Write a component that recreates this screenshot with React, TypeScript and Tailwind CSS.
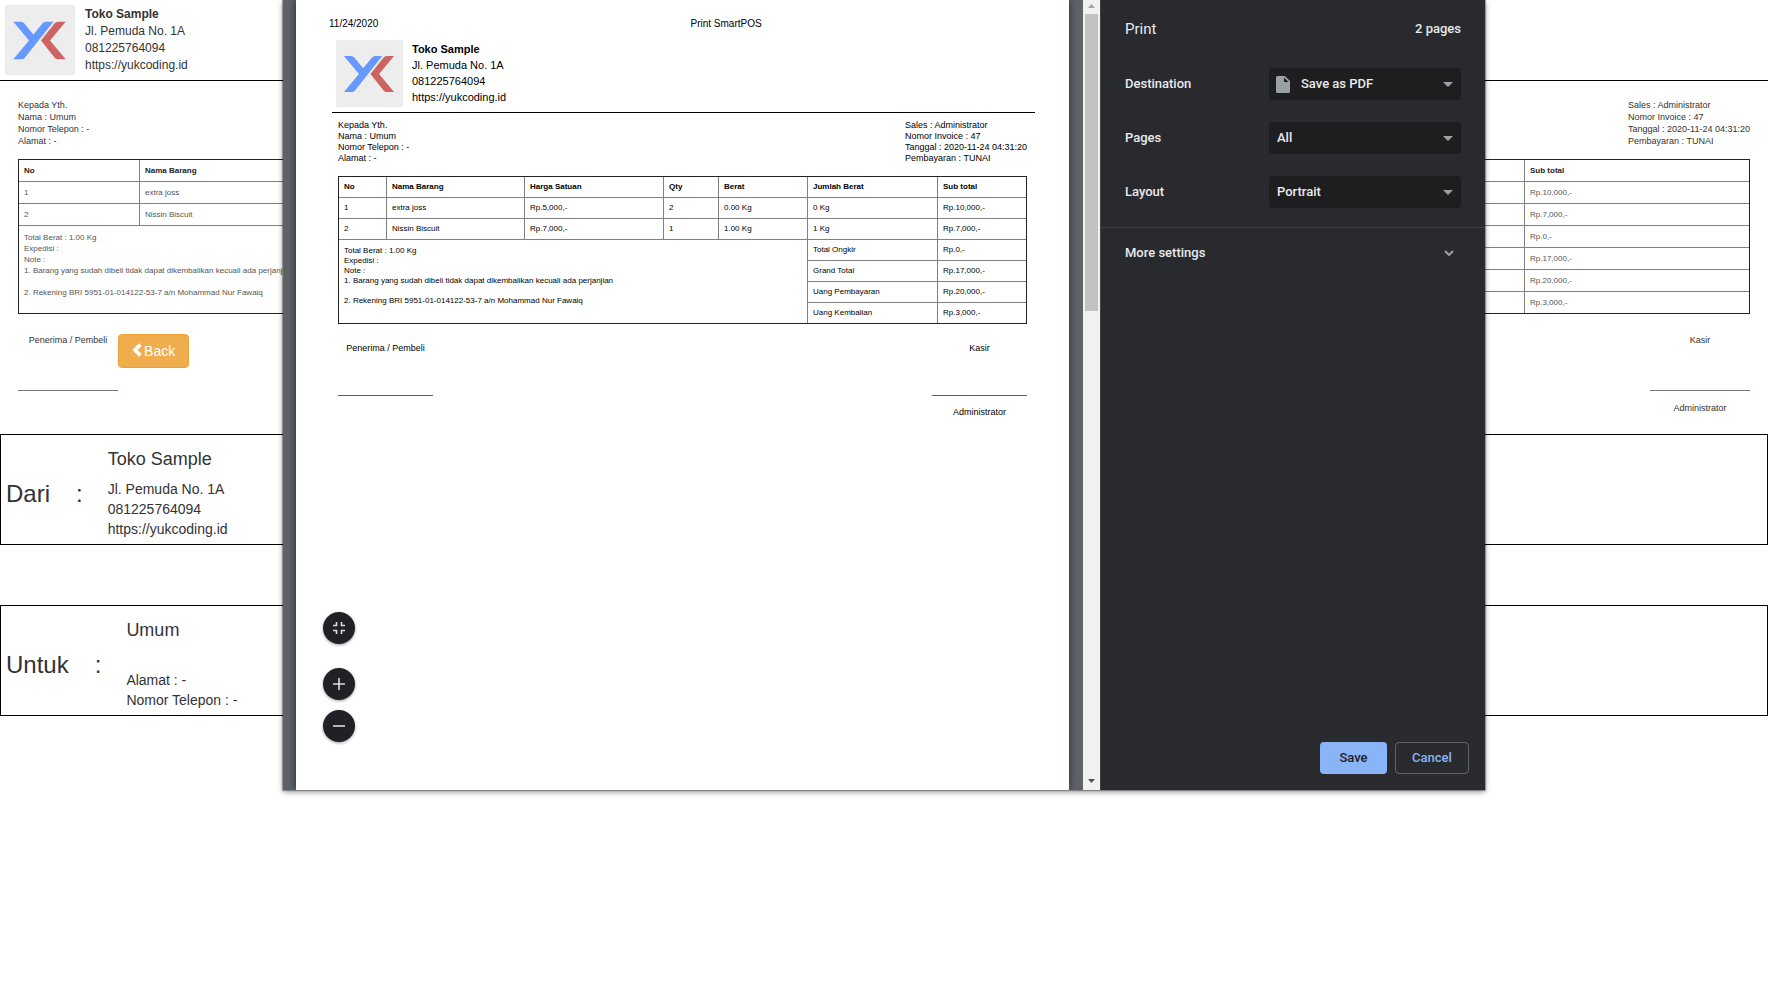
import { ReactNode } from 'react'

type Variant = 'page' | 'print'

const STYLES = {
    page: {
        header: 'flex gap-[10px] border-b border-black p-[5px]',
        logo: 'h-[70px] w-[70px]',
        shop: 'pt-px text-[12px] leading-[17px]',
        body: 'px-[18px] pt-[18px] text-[#333]',
        info: 'mb-3 flex justify-between text-[9px] leading-[12px]',
        cells: 'text-[8px] leading-[11px] text-[#555]',
        head: 'text-[#222]',
        row: 'h-[22px]',
        firstRow: 'h-[21px]',
        note: 'pt-[6px]',
        cols: ['w-[120px]', '', '', '', '', '', 'w-[225px]'],
        sign: 'mt-5 flex justify-between text-[9px] leading-[12px]',
        line: 'mt-[34px]',
        name: 'mt-[10px]',
        underscores: 20,
    },
    print: {
        header: 'ml-[3px] mr-px flex gap-[9px] border-b border-black px-1 pb-[5px]',
        logo: 'h-[67px] w-[67px]',
        shop: 'pt-px text-[11px] leading-[16px]',
        body: 'pl-[9px] pr-[9px] pt-[7px] text-black',
        info: 'mb-3 flex justify-between text-[9px] leading-[11px]',
        cells: 'text-[8px] leading-[10px] text-black',
        head: '',
        row: 'h-[21px]',
        firstRow: 'h-[20px]',
        note: 'pt-[6px]',
        cols: ['w-[47px]', 'w-[138px]', 'w-[139px]', 'w-[55px]', 'w-[89px]', 'w-[130px]', ''],
        sign: 'mt-[18px] flex justify-between text-[9px] leading-[12px]',
        line: 'mt-[31px]',
        name: 'mt-[9px]',
        underscores: 19,
    },
}

const HEADINGS = ['No', 'Nama Barang', 'Harga Satuan', 'Qty', 'Berat', 'Jumlah Berat', 'Sub total']

const ITEMS = [
    ['1', 'extra joss', 'Rp.5,000,-', '2', '0.00 Kg', '0 Kg', 'Rp.10,000,-'],
    ['2', 'Nissin Biscuit', 'Rp.7,000,-', '1', '1.00 Kg', '1 Kg', 'Rp.7,000,-'],
]

const TOTALS = [
    ['Total Ongkir', 'Rp.0,-'],
    ['Grand Total', 'Rp.17,000,-'],
    ['Uang Pembayaran', 'Rp.20,000,-'],
    ['Uang Kembalian', 'Rp.3,000,-'],
]

function Logo({ className }: { className: string }) {
    return (
        <svg className={`shrink-0 ${className}`} viewBox="0 0 70 70" role="img" aria-label="Toko Sample">
            <rect width="70" height="70" fill="#ededed" />
            <path
                d="M8.3 16.700h7.500q2 0 3.300 1.600l9.300 11.200 9.200-11.200q1.300-1.600 3.300-1.600h7.500L19.800 52.700q-1.300 1.600-3.300 1.600H8.300L24 35.500z"
                fill="#6699ff"
            />
            <path
                d="M60.700 16.700h-7.700q-2 0-3.300 1.600L36 35.500l13.700 17.200q1.300 1.600 3.300 1.600h7.700L45 35.500z"
                fill="#cc6464"
            />
        </svg>
    )
}

function InvoiceTable({ variant }: { variant: Variant }) {
    const s = STYLES[variant]
    return (
        <table className={`w-full table-fixed border-separate border-spacing-0 border border-[#222] text-left ${s.cells}`}>
            <thead>
                <tr className={s.head}>
                    {HEADINGS.map((h, i) => (
                        <th
                            key={h}
                            className={`border-[#808080] px-[5px] py-0 font-bold ${s.firstRow} ${s.cols[i]} ${i > 0 ? 'border-l' : ''}`}
                        >
                            {h}
                        </th>
                    ))}
                </tr>
            </thead>
            <tbody>
                {ITEMS.map((item) => (
                    <tr key={item[0]}>
                        {item.map((value, i) => (
                            <td key={i} className={`border-t border-[#808080] px-[5px] py-0 ${s.row} ${i > 0 ? 'border-l' : ''}`}>
                                {value}
                            </td>
                        ))}
                    </tr>
                ))}
                {TOTALS.map(([label, value], i) => (
                    <tr key={label}>
                        {i === 0 && (
                            <td colSpan={5} rowSpan={4} className={`border-t border-[#808080] px-[5px] align-top ${s.note}`}>
                                <p>Total Berat : 1.00 Kg</p>
                                <p>Expedisi :</p>
                                <p>Note :</p>
                                <p>1. Barang yang sudah dibeli tidak dapat dikembalikan kecuali ada perjanjian</p>
                                <br />
                                <p>2. Rekening BRI 5951-01-014122-53-7 a/n Mohammad Nur Fawaiq</p>
                            </td>
                        )}
                        <td className={`border-l border-t border-[#808080] px-[5px] py-0 ${s.row}`}>{label}</td>
                        <td className={`border-l border-t border-[#808080] px-[5px] py-0 ${s.row}`}>{value}</td>
                    </tr>
                ))}
            </tbody>
        </table>
    )
}

function Invoice({ variant, action }: { variant: Variant; action?: ReactNode }) {
    const s = STYLES[variant]
    const line = '_'.repeat(s.underscores)
    return (
        <section>
            <header className={s.header}>
                <Logo className={s.logo} />
                <div className={s.shop}>
                    <p className="font-bold">Toko Sample</p>
                    <p>Jl. Pemuda No. 1A</p>
                    <p>081225764094</p>
                    <p>https://yukcoding.id</p>
                </div>
            </header>

            <div className={s.body}>
                <div className={s.info}>
                    <div>
                        <p>Kepada Yth.</p>
                        <p>Nama : Umum</p>
                        <p>Nomor Telepon : -</p>
                        <p>Alamat : -</p>
                    </div>
                    <div>
                        <p>Sales : Administrator</p>
                        <p>Nomor Invoice : 47</p>
                        <p>Tanggal : 2020-11-24 04:31:20</p>
                        <p>Pembayaran : TUNAI</p>
                    </div>
                </div>

                <InvoiceTable variant={variant} />

                <div className={s.sign}>
                    <div className="flex items-start">
                        <div className="text-center">
                            <p>Penerima / Pembeli</p>
                            <p className={s.line}>{line}</p>
                        </div>
                        {action}
                    </div>
                    <div className="text-center">
                        <p>Kasir</p>
                        <p className={s.line}>{line}</p>
                        <p className={s.name}>Administrator</p>
                    </div>
                </div>
            </div>
        </section>
    )
}

function AddressBox({ label, name, children }: { label: string; name: string; children: ReactNode }) {
    return (
        <section className="flex h-[111px] items-center border border-black pl-[5px] pt-2 text-[14px] leading-[20px] text-[#333]">
            <h2 className="text-[24px] leading-[26px]">{label}</h2>
            <span className="ml-[26px] text-[24px] leading-[26px]">:</span>
            <div className="ml-[25px] flex h-[90px] flex-col justify-between">
                <h3 className="text-[18px] leading-[20px]">{name}</h3>
                <div>{children}</div>
            </div>
        </section>
    )
}

function ZoomButton({ label, path }: { label: string; path: string }) {
    return (
        <button
            aria-label={label}
            className="flex h-8 w-8 items-center justify-center rounded-full bg-[#202124] text-[#dadce0] shadow-[0_1px_3px_rgba(0,0,0,0.4)]"
        >
            <svg className="h-5 w-5" viewBox="0 0 20 20" fill="none" stroke="currentColor" strokeWidth="1.6">
                <path d={path} />
            </svg>
        </button>
    )
}

function Preview() {
    return (
        <div className="relative flex min-w-0 flex-1 overflow-hidden bg-[#5f6368] pl-[13px]">
            <div className="mr-[14px] min-w-0 flex-1 bg-white px-[33px] pt-[18px] text-black shadow-[0_0_8px_rgba(0,0,0,0.6)]">
                <div className="mb-[10px] grid grid-cols-2 text-[10px] leading-[12px]">
                    <span>11/24/2020</span>
                    <span className="pl-2">Print SmartPOS</span>
                </div>
                <Invoice variant="print" />
            </div>

            {/* Scrollbar */}
            <div className="flex w-[17px] flex-col items-center bg-[#f1f1f1]">
                <svg className="h-[14px] w-[9px] text-[#a3a3a3]" viewBox="0 0 9 14" fill="currentColor">
                    <path d="M1 8l3.500-4L8 8z" />
                </svg>
                <div className="h-[297px] w-[13px] bg-[#c1c1c1]" />
                <svg className="mt-auto h-[17px] w-[9px] text-[#505050]" viewBox="0 0 9 17" fill="currentColor">
                    <path d="M1 6l3.500 4L8 6z" />
                </svg>
            </div>

            {/* Zoom controls float over the sheet */}
            <div className="absolute bottom-12 left-10 flex flex-col">
                <ZoomButton label="Fit to page" path="M4 7.500h3.500V4M12.500 4v3.500H16M16 12.500h-3.500V16M7.500 16v-3.500H4" />
                <div className="mt-6 flex flex-col gap-[10px]">
                    <ZoomButton label="Zoom in" path="M10 4v12M4 10h12" />
                    <ZoomButton label="Zoom out" path="M4 10h12" />
                </div>
            </div>
        </div>
    )
}

function SelectRow({ id, label, options, icon }: { id: string; label: string; options: string[]; icon?: boolean }) {
    return (
        <div className="flex items-center justify-between">
            <label htmlFor={id}>{label}</label>
            <div className="relative w-[192px]">
                <select
                    id={id}
                    className={`h-8 w-full appearance-none rounded bg-[#1e1e20] pr-8 outline-none ${icon ? 'pl-8' : 'pl-2'}`}
                >
                    {options.map((o) => (
                        <option key={o}>{o}</option>
                    ))}
                </select>
                {icon && (
                    <svg className="pointer-events-none absolute left-[7px] top-2 h-[17px] w-[14px]" viewBox="0 0 14 17">
                        <path
                            d="M1.500 0H9l5 5v10.500a1.500 1.500 0 0 1-1.500 1.500h-11A1.500 1.500 0 0 1 0 15.500v-14A1.500 1.500 0 0 1 1.500 0zM8 1.500V6h4.500z"
                            fill="#9aa0a6"
                            fillRule="evenodd"
                        />
                    </svg>
                )}
                <svg className="pointer-events-none absolute right-2 top-[14px] h-[5px] w-[10px]" viewBox="0 0 10 5">
                    <path d="M0 0h10L5 5z" fill="#9aa0a6" />
                </svg>
            </div>
        </div>
    )
}

function Sidebar() {
    return (
        <aside className="flex w-[385px] shrink-0 flex-col border-l border-[#3c4043] bg-[#292a2d] font-[Roboto,sans-serif] text-[13px] font-medium leading-[20px] text-[#e8eaed]">
            <div className="flex items-center justify-between px-6 pt-[19px]">
                <h1 className="text-[15px] font-normal">Print</h1>
                <span>2 pages</span>
            </div>
            <div className="mt-[29px] flex flex-col gap-[22px] px-6">
                <SelectRow id="destination" label="Destination" options={['Save as PDF']} icon />
                <SelectRow id="pages" label="Pages" options={['All', 'Custom']} />
                <SelectRow id="layout" label="Layout" options={['Portrait', 'Landscape']} />
            </div>
            <button className="mt-[19px] flex h-[50px] items-center justify-between border-t border-[#3f4042] pl-6 pr-[31px]">
                More settings
                <svg className="h-[6px] w-[10px]" viewBox="0 0 10 6" fill="none" stroke="#9aa0a6" strokeWidth="2">
                    <path d="M1 1l4 4 4-4" />
                </svg>
            </button>
            <div className="mt-auto flex justify-end gap-2 p-4">
                <button className="h-8 w-[67px] rounded bg-[#8ab4f8] text-[#202124]">Save</button>
                <button className="h-8 w-[74px] rounded border border-[#5f6368] text-[#8ab4f8]">Cancel</button>
            </div>
        </aside>
    )
}

export default function App() {
    return (
        <div className="relative min-h-screen overflow-hidden bg-white font-['Liberation_Sans',Arial,sans-serif] text-[#333]">
            <main>
                <Invoice
                    variant="page"
                    action={
                        <button className="flex h-[34px] w-[71px] items-center justify-center gap-[2px] rounded border border-[#eea236] bg-[#f0ad4e] text-[14px] text-white">
                            <svg className="mb-[2px] h-[14px] w-[10px]" viewBox="0 0 10 14" fill="currentColor">
                                <path d="M7 0.300L9.700 3 5.700 7l4 4L7 13.700 0.300 7z" />
                            </svg>
                            Back
                        </button>
                    }
                />
                <div className="mt-5 flex flex-col gap-[60px]">
                    <AddressBox label="Dari" name="Toko Sample">
                        <p>Jl. Pemuda No. 1A</p>
                        <p>081225764094</p>
                        <p>https://yukcoding.id</p>
                    </AddressBox>
                    <AddressBox label="Untuk" name="Umum">
                        <p>Alamat : -</p>
                        <p>Nomor Telepon : -</p>
                    </AddressBox>
                </div>
            </main>

            <div
                role="dialog"
                aria-label="Print"
                className="absolute inset-x-0 top-0 mx-auto flex h-[calc(100vh-202px)] max-w-[1202px] shadow-[0_0_1px_1px_rgba(0,0,0,0.3),0_2px_6px_rgba(0,0,0,0.4)]"
            >
                <Preview />
                <Sidebar />
            </div>
        </div>
    )
}
